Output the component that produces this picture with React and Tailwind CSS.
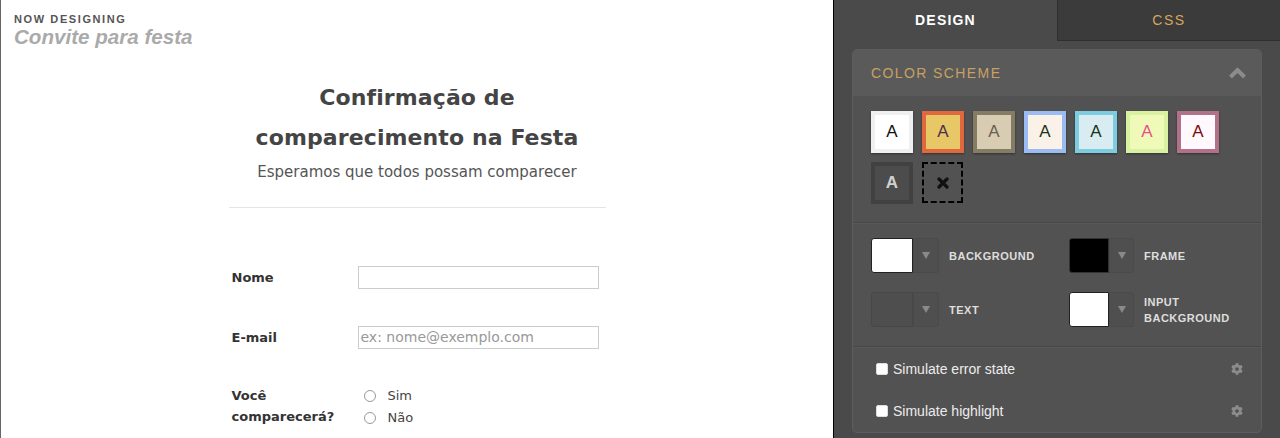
import React from "react";
import { FaCog } from "react-icons/fa";

const schemes = [
  { border: "border-[#f0f0f0]", bg: "bg-white", text: "text-[#111]" },
  { border: "border-[#e0683e]", bg: "bg-[#e8c766]", text: "text-[#4a2f50]" },
  { border: "border-[#857c66]", bg: "bg-[#d8ccb2]", text: "text-[#6a604e]" },
  { border: "border-[#9bbcf2]", bg: "bg-[#faf2e8]", text: "text-[#173417]" },
  { border: "border-[#7ccde2]", bg: "bg-[#d9ecf1]", text: "text-[#173417]" },
  { border: "border-[#d9f2a2]", bg: "bg-[#eff9b8]", text: "text-[#e8508a]" },
  { border: "border-[#b07189]", bg: "bg-[#fff8fc]", text: "text-[#7d0a0a]" },
];

// second column swatches are a touch narrower in the design
const pickers = [
  { label: "BACKGROUND", color: "bg-white border-[#222]", narrow: false },
  { label: "FRAME", color: "bg-black border-[#333]", narrow: true },
  { label: "TEXT", color: "bg-[#4e4e4e] border-[#474747]", narrow: false },
  { label: "INPUT BACKGROUND", color: "bg-white border-[#222]", narrow: true },
];

function Picker({ label, color, narrow }) {
  return (
    <div className="flex items-center">
      <div className="flex h-[35px]">
        <div className={`${narrow ? "w-[40px]" : "w-[42px]"} h-[35px] border rounded-l-[3px] ${color}`} />
        <div className={`${narrow ? "w-[25px]" : "w-[26px]"} h-[35px] bg-[#4f4f4f] border border-[#4a4a4a] rounded-r-[3px] flex items-center justify-center`}>
          <svg width="8" height="7" viewBox="0 0 8 7">
            <path d="M0 0 H8 L4 7 Z" fill="#8a8a8a" />
          </svg>
        </div>
      </div>
      <span className="ml-[10px] w-[90px] text-[11px] leading-[16px] font-bold tracking-[0.5px] text-[#dedede]">
        {label}
      </span>
    </div>
  );
}

function Toggle({ label }) {
  return (
    <div className="h-[42px] flex items-center justify-between pl-[23px] pr-[18px]">
      <div className="flex items-center">
        <span className="w-[12px] h-[12px] bg-white rounded-[2px] border border-[#ddd]" />
        <span className="ml-[5px] text-[14px] text-[#ececec]">{label}</span>
      </div>
      <FaCog className="text-[#8c8c8c] w-[12px] h-[12px]" />
    </div>
  );
}

export default function App() {
  const sans = { fontFamily: '"DejaVu Sans", Verdana, sans-serif' };
  return (
    <div className="flex w-[1280px] h-[438px] overflow-hidden font-['Liberation_Sans',Arial,sans-serif]">
      {/* preview */}
      <div className="w-[833px] h-full bg-white border-l border-[#666] flex flex-col">
        <div className="pl-[13px] pt-[13px]">
          <div className="text-[11px] leading-[13px] font-bold tracking-[1.6px] text-[#555]">NOW DESIGNING</div>
          <div className="text-[20.6px] leading-[22px] font-bold italic text-[#aaa]">Convite para festa</div>
        </div>

        <div className="w-[377px] mx-auto" style={sans}>
          <div className="mt-[30px] pb-[24px] border-b border-[#e5e5e5] text-center">
            <h1 className="text-[22px] leading-[40px] font-bold text-[#444] tracking-[0.1px]">
              Confirmação de
              <br />
              comparecimento na Festa
            </h1>
            <p className="mt-[3px] text-[15px] leading-[22px] text-[#555]">
              Esperamos que todos possam comparecer
            </p>
          </div>

          <div className="mt-[58px] flex items-center pl-[3px]">
            <label className="w-[126px] text-[13px] font-bold text-[#333]">Nome</label>
            <div className="w-[241px] h-[23px] border border-[#ccc]" />
          </div>

          <div className="mt-[37px] flex items-center pl-[3px]">
            <label className="w-[126px] text-[13px] font-bold text-[#333]">E-mail</label>
            <div className="w-[241px] h-[23px] border border-[#ccc] flex items-center pl-[2px] text-[14px] text-[#999]">
              ex: nome@exemplo.com
            </div>
          </div>

          <div className="mt-[36px] flex pl-[3px]">
            <label className="w-[132px] text-[13px] leading-[21px] font-bold text-[#333]">
              Você
              <br />
              comparecerá?
            </label>
            <div className="text-[13px] leading-[22px] text-[#444]">
              <div className="flex items-center">
                <span className="w-[12px] h-[12px] rounded-full border border-[#999]" />
                <span className="ml-[12px]">Sim</span>
              </div>
              <div className="flex items-center">
                <span className="w-[12px] h-[12px] rounded-full border border-[#999]" />
                <span className="ml-[12px]">Não</span>
              </div>
            </div>
          </div>
        </div>
      </div>

      {/* settings panel */}
      <div className="w-[447px] h-full bg-[#4a4a4a] border-l border-black flex flex-col">
        <div className="flex h-[41px]">
          <div className="flex-1 flex items-center justify-center text-[14px] font-bold tracking-[1.2px] text-white">
            DESIGN
          </div>
          <div className="w-[223px] flex items-center justify-center bg-[#3b3b3b] border-l border-b border-[#2f2f2f] text-[14px] tracking-[1.6px] text-[#d6a55e]">
            CSS
          </div>
        </div>

        <div className="mx-[18px] mt-[8px] bg-[#525252] border border-[#5d5d5d] rounded-[5px] overflow-hidden">
          <div className="h-[46px] bg-[#5a5a5a] flex items-center justify-between pl-[18px] pr-[14px]">
            <span className="text-[14px] tracking-[1.4px] text-[#c9a063]">COLOR SCHEME</span>
            <svg width="19" height="12" viewBox="0 0 19 12">
              <path d="M2.5 10 L9.5 3 L16.5 10" fill="none" stroke="#8c8c8c" strokeWidth="4" />
            </svg>
          </div>

          <div className="pt-[15px] pb-[18px] pl-[18px] pr-[10px] flex flex-wrap gap-[9px] border-b border-[#474747]">
            {schemes.map((s, i) => (
              <div
                key={i}
                className={`w-[42px] h-[42px] border-4 ${s.border} ${s.bg} flex items-center justify-center shadow-[0_1px_2px_rgba(0,0,0,0.4)]`}
              >
                <span className={`text-[17px] ${s.text}`}>A</span>
              </div>
            ))}
            <div className="w-[42px] h-[42px] border-4 border-[#414141] bg-[#4c4c4c] flex items-center justify-center">
              <span className="text-[17px] font-bold text-[#d0d0d0]">A</span>
            </div>
            <div className="w-[41px] h-[41px] border-2 border-dashed border-black flex items-center justify-center">
              <svg width="12" height="12" viewBox="0 0 12 12">
                <path d="M2 2 L10 10 M10 2 L2 10" stroke="#111" strokeWidth="3.2" strokeLinecap="round" />
              </svg>
            </div>
          </div>

          <div className="pt-[14px] pb-[19px] pl-[18px] grid grid-cols-[198px_1fr] gap-y-[19px] border-t border-[#595959] border-b border-b-[#474747]">
            {pickers.map((p) => (
              <Picker key={p.label} {...p} />
            ))}
          </div>

          <div className="border-t border-[#595959]">
            <Toggle label="Simulate error state" />
            <Toggle label="Simulate highlight" />
          </div>
        </div>
      </div>
    </div>
  );
}
